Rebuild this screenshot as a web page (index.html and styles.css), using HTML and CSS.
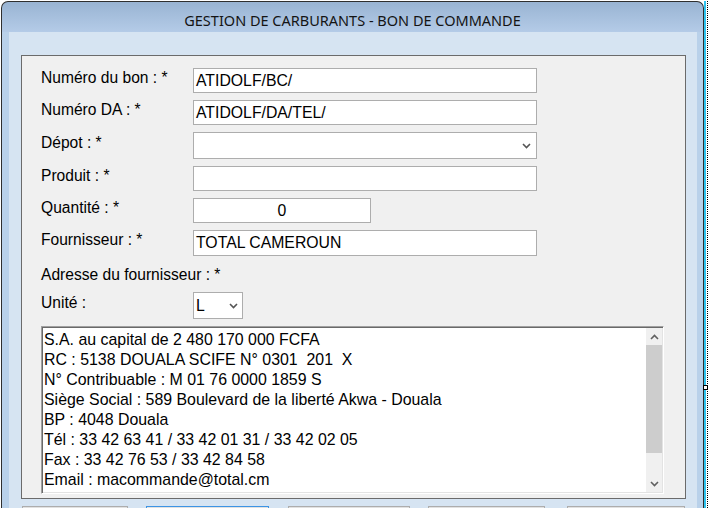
FILE: index.html
```html
<!DOCTYPE html>
<html lang="fr">
<head>
<meta charset="utf-8">
<title>Bon de commande</title>
<link rel="stylesheet" href="styles.css">
</head>
<body>
<div class="screen">
  <div class="window">
    <div class="titlebar">GESTION DE CARBURANTS - BON DE COMMANDE</div>
    <div class="frame">
      <div class="client">
        <div class="panel">
          <div class="row">
            <div class="label">Numéro du bon : *</div>
            <div class="field">ATIDOLF/BC/</div>
          </div>
          <div class="row">
            <div class="label">Numéro DA : *</div>
            <div class="field">ATIDOLF/DA/TEL/</div>
          </div>
          <div class="row">
            <div class="label">Dépot : *</div>
            <div class="field select"><span></span>
              <svg class="chev" width="9" height="6" viewBox="0 0 9 6"><polyline points="1,1 4.5,4.5 8,1" fill="none" stroke="#555" stroke-width="1.6"/></svg>
            </div>
          </div>
          <div class="row">
            <div class="label">Produit : *</div>
            <div class="field"></div>
          </div>
          <div class="row">
            <div class="label">Quantité : *</div>
            <div class="field field-qty">0</div>
          </div>
          <div class="row">
            <div class="label">Fournisseur : *</div>
            <div class="field field-tall">TOTAL CAMEROUN</div>
          </div>
          <div class="row row-plain">
            <div class="label">Adresse du fournisseur : *</div>
          </div>
          <div class="row">
            <div class="label">Unité :</div>
            <div class="field select field-unit"><span>L</span>
              <svg class="chev" width="9" height="6" viewBox="0 0 9 6"><polyline points="1,1 4.5,4.5 8,1" fill="none" stroke="#555" stroke-width="1.6"/></svg>
            </div>
          </div>
          <div class="memo">
            <div class="memo-text">S.A. au capital de 2 480 170 000 FCFA
RC : 5138 DOUALA SCIFE N° 0301  201  X
N° Contribuable : M 01 76 0000 1859 S
Siège Social : 589 Boulevard de la liberté Akwa - Douala
BP : 4048 Douala
Tél : 33 42 63 41 / 33 42 01 31 / 33 42 02 05
Fax : 33 42 76 53 / 33 42 84 58
Email : macommande@total.cm</div>
            <div class="scrollbar">
              <div class="sb-btn"><svg width="9" height="6" viewBox="0 0 9 6"><polyline points="1,5 4.5,1.5 8,5" fill="none" stroke="#606060" stroke-width="1.6"/></svg></div>
              <div class="sb-track"><div class="sb-thumb"></div></div>
              <div class="sb-btn"><svg width="9" height="6" viewBox="0 0 9 6"><polyline points="1,1 4.5,4.5 8,1" fill="none" stroke="#606060" stroke-width="1.6"/></svg></div>
            </div>
          </div>
        </div>
        <div class="buttons">
          <div class="btn btn-a"></div>
          <div class="btn btn-b btn-default"></div>
          <div class="btn btn-c"></div>
          <div class="btn btn-d"></div>
          <div class="btn btn-e"></div>
        </div>
      </div>
    </div>
  </div>
  <div class="edge">
    <div class="edge-line"></div>
    <div class="edge-gap"></div>
    <div class="edge-dots"></div>
  </div>
  <div class="handle"></div>
</div>
</body>
</html>
```

FILE: styles.css
```css
html, body {
  margin: 0;
  padding: 0;
}
body {
  width: 708px;
  height: 508px;
  overflow: hidden;
  background: #ffffff;
  font-family: "Liberation Sans", Arial, sans-serif;
  color: #000;
}
.screen {
  position: relative;
  display: flex;
  height: 508px;
  box-sizing: border-box;
  padding: 1px 0 0 1px;
}
.window {
  width: 703px;
  box-sizing: border-box;
  border: 1px solid #2f2f2f;
  border-bottom: none;
  border-radius: 7px 7px 0 0;
  background: linear-gradient(#99b4d3, #b4cbe7 30px, #b9d1ea 30px);
  display: flex;
  flex-direction: column;
  overflow: hidden;
}
.titlebar {
  height: 30px;
  box-sizing: border-box;
  padding-top: 6px;
  line-height: 24px;
  text-align: center;
  font-family: "Noto Sans", "Open Sans", sans-serif;
  font-size: 14.5px;
  color: #141414;
}
.frame {
  flex: 1;
  display: flex;
  padding: 0 6px 0 7px;
}
.client {
  flex: 1;
  background: #d6e4f2;
  padding: 23px 11px 0 12px;
  display: flex;
  flex-direction: column;
}
.panel {
  height: 444px;
  box-sizing: border-box;
  border: 1px solid #6b6b6b;
  background: #f0f0f0;
  padding: 12px 0 0 19px;
  display: flex;
  flex-direction: column;
  gap: 7px;
}
.row {
  display: flex;
  align-items: center;
}
.label {
  width: 152px;
  padding-bottom: 6px;
  font-size: 15.6px;
  line-height: 18px;
  white-space: nowrap;
}
.row-plain .label {
  padding: 3px 0 1px;
}
.field {
  box-sizing: border-box;
  width: 344px;
  height: 25px;
  border: 1px solid #adadad;
  background: #ffffff;
  padding: 0 2px;
  font-size: 15.8px;
  line-height: 23px;
  white-space: nowrap;
}
.field-tall {
  height: 26px;
  line-height: 24px;
}
.field-qty {
  width: 178px;
  text-align: center;
}
.select {
  height: 27px;
  display: flex;
  align-items: center;
  justify-content: space-between;
  padding: 0 5px 0 2px;
}
.field-unit {
  width: 50px;
  padding-right: 4px;
}
.chev {
  display: block;
  margin-top: 1px;
}
.memo {
  width: 623px;
  height: 168px;
  box-sizing: border-box;
  display: flex;
  border-style: solid;
  border-width: 1px;
  border-color: #a0a0a0 #ffffff #ffffff #a0a0a0;
  box-shadow: inset 1px 1px 0 #696969, inset -1px -1px 0 #e3e3e3;
  background: #ffffff;
}
.memo-text {
  flex: 1;
  padding: 3px 0 0 2px;
  font-size: 15.9px;
  line-height: 20px;
  white-space: pre;
  overflow: hidden;
}
.scrollbar {
  width: 16px;
  margin: 1px 1px 1px 0;
  display: flex;
  flex-direction: column;
  background: #f0f0f0;
}
.sb-btn {
  height: 17px;
  display: flex;
  align-items: center;
  justify-content: center;
}
.sb-btn svg {
  display: block;
}
.sb-track {
  flex: 1;
}
.sb-thumb {
  height: 108px;
  background: #cdcdcd;
}
.buttons {
  display: flex;
  padding-left: 1px;
  margin-top: 7px;
}
.btn {
  height: 28px;
  box-sizing: border-box;
  border: 1px solid #adadad;
  background: #e1e1e1;
  flex: none;
}
.btn-default {
  border-color: #3d94e4;
}
.btn-a { width: 106px; }
.btn-b { width: 123px; margin-left: 18px; }
.btn-c { width: 122px; margin-left: 19px; }
.btn-d { width: 117px; margin-left: 18px; }
.btn-e { width: 118px; margin-left: 22px; }
.edge {
  width: 4px;
  display: flex;
}
.edge-line {
  width: 2px;
  background: #2ec3ef;
}
.edge-gap {
  width: 1px;
  background: #ffffff;
}
.edge-dots {
  width: 1px;
  background: repeating-linear-gradient(#000000 0 1px, #ffffff 1px 2px);
}
.handle {
  position: absolute;
  left: 703px;
  top: 385px;
  width: 5px;
  height: 5px;
  box-sizing: border-box;
  border: 1px solid #000;
  background: #fff;
}
```
